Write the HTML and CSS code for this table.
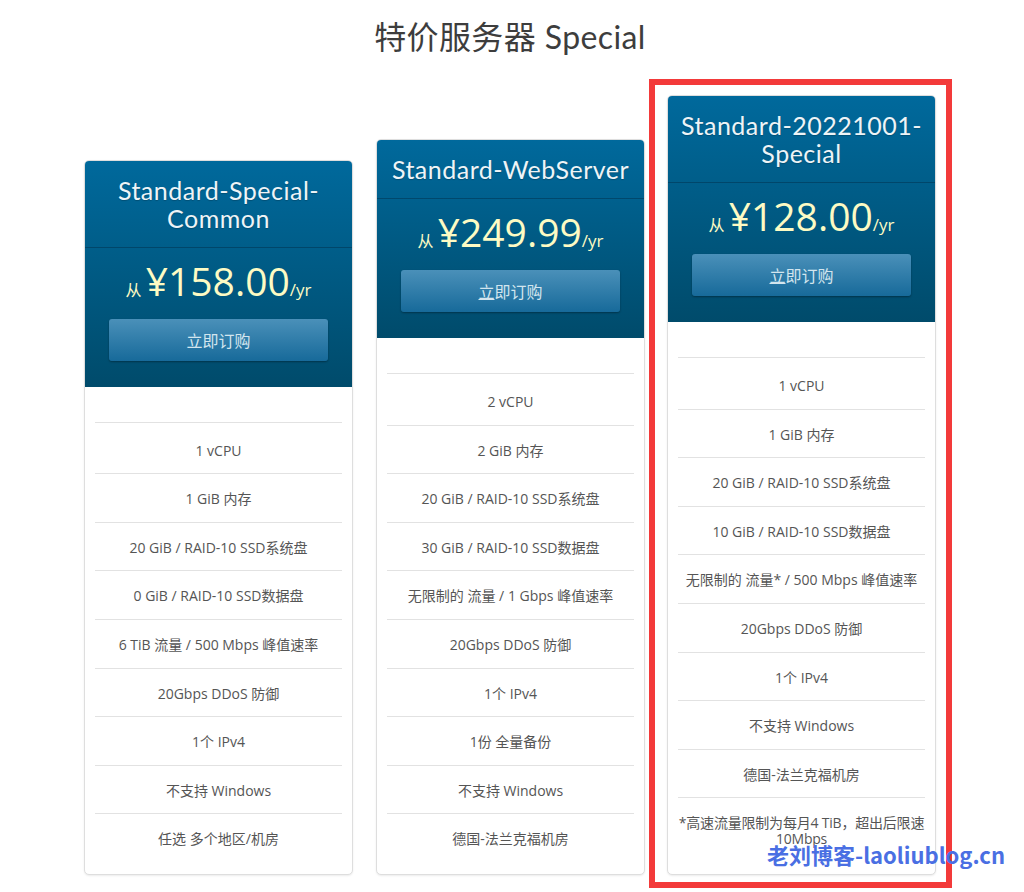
FILE: index.html
```html
<!DOCTYPE html>
<html lang="zh-CN">
<head>
<meta charset="utf-8">
<title>特价服务器 Special</title>
<link rel="stylesheet" href="styles.css">
</head>
<body>
<h1 class="page-title">特价服务器 Special</h1>
<div class="plans">
  <div class="plan">
    <div class="plan-head">
      <div class="plan-name">Standard-Special-Common</div>
      <div class="plan-price">
        <div class="price"><span class="from">从</span> <span class="amount">¥158.00</span><span class="unit">/yr</span></div>
        <a class="btn">立即订购</a>
      </div>
    </div>
    <ul class="features">
      <li>1 vCPU</li>
      <li>1 GiB 内存</li>
      <li>20 GiB / RAID-10 SSD系统盘</li>
      <li>0 GiB / RAID-10 SSD数据盘</li>
      <li>6 TiB 流量 / 500 Mbps 峰值速率</li>
      <li>20Gbps DDoS 防御</li>
      <li>1个 IPv4</li>
      <li>不支持 Windows</li>
      <li>任选 多个地区/机房</li>
    </ul>
  </div>
  <div class="plan">
    <div class="plan-head">
      <div class="plan-name">Standard-WebServer</div>
      <div class="plan-price">
        <div class="price"><span class="from">从</span> <span class="amount">¥249.99</span><span class="unit">/yr</span></div>
        <a class="btn"><span class="u">立</span>即订购</a>
      </div>
    </div>
    <ul class="features">
      <li>2 vCPU</li>
      <li>2 GiB 内存</li>
      <li>20 GiB / RAID-10 SSD系统盘</li>
      <li>30 GiB / RAID-10 SSD数据盘</li>
      <li>无限制的 流量 / 1 Gbps 峰值速率</li>
      <li>20Gbps DDoS 防御</li>
      <li>1个 IPv4</li>
      <li>1份 全量备份</li>
      <li>不支持 Windows</li>
      <li>德国-法兰克福机房</li>
    </ul>
  </div>
  <div class="highlight">
    <div class="plan">
      <div class="plan-head">
        <div class="plan-name">Standard-20221001-Special</div>
        <div class="plan-price">
          <div class="price"><span class="from">从</span> <span class="amount">¥128.00</span><span class="unit">/yr</span></div>
          <a class="btn"><span class="u">立</span>即订购</a>
        </div>
      </div>
      <ul class="features">
        <li>1 vCPU</li>
        <li>1 GiB 内存</li>
        <li>20 GiB / RAID-10 SSD系统盘</li>
        <li>10 GiB / RAID-10 SSD数据盘</li>
        <li>无限制的 流量* / 500 Mbps 峰值速率</li>
        <li>20Gbps DDoS 防御</li>
        <li>1个 IPv4</li>
        <li>不支持 Windows</li>
        <li>德国-法兰克福机房</li>
        <li class="note">*高速流量限制为每月4 TiB，超出后限速10Mbps</li>
      </ul>
    </div>
  </div>
</div>
<div class="watermark">老刘博客-laoliublog.cn</div>
</body>
</html>
```

FILE: styles.css
```css
html, body {
  margin: 0;
  padding: 0;
  background: #fff;
}

body {
  position: relative;
  width: 1024px;
  height: 892px;
  overflow: hidden;
  font-family: "Open Sans", "Noto Sans CJK SC", sans-serif;
}

.page-title {
  margin: 0;
  padding-top: 17px;
  padding-right: 4px;
  text-align: center;
  font-family: "Lato", "Noto Sans CJK SC", sans-serif;
  font-weight: 400;
  font-size: 32px;
  line-height: 40px;
  letter-spacing: 0.4px;
  color: #3d3d3d;
}

.plans {
  display: flex;
  align-items: flex-end;
  gap: 23px;
  width: 852px;
  margin: 22px 0 0 84px;
}

.plan {
  position: relative;
  width: 269px;
  box-sizing: border-box;
  background: #fff;
  border: 1px solid #dedede;
  border-radius: 5px;
  box-shadow: 0 1px 2px rgba(0, 0, 0, 0.08);
}

.plan::after {
  content: "";
  position: absolute;
  left: 10%;
  right: 10%;
  bottom: 2px;
  height: 12px;
  border-radius: 50%;
  box-shadow: 0 4px 4px rgba(0, 0, 0, 0.35);
  z-index: -1;
}

.highlight {
  margin: 0 -16px -13px -19px;
  padding: 10px 10px 7px 12px;
  border: 6px solid #f33a3a;
}

.plan-head {
  background: linear-gradient(#00699c, #004b6b);
  border-radius: 4px 4px 0 0;
  color: #eef4f7;
  text-align: center;
}

.plan-name {
  padding: 15px 8px;
  font-family: "Lato", sans-serif;
  font-size: 25px;
  line-height: 28px;
  letter-spacing: 0.5px;
  border-bottom: 1px solid rgba(0, 30, 50, 0.35);
  text-shadow: 0 1px 1px rgba(0, 0, 0, 0.2);
}

.plan-price {
  padding: 9px 24px 26px;
}

.price {
  height: 48px;
  line-height: 48px;
  color: #fdfbc4;
  white-space: nowrap;
}

.from {
  font-family: "Noto Sans CJK SC", sans-serif;
  font-size: 16px;
}

.amount {
  font-size: 39px;
}

.unit {
  font-size: 17px;
}

.btn {
  display: block;
  margin-top: 14px;
  height: 42px;
  line-height: 42px;
  border-radius: 3px;
  background: linear-gradient(#4a90b9, #176a9a);
  box-shadow: 0 1px 2px rgba(0, 0, 0, 0.35);
  color: #d3e5ee;
  font-family: "Noto Sans CJK SC", sans-serif;
  font-size: 16px;
  text-align: center;
}

.u {
  text-decoration: underline;
}

.features {
  list-style: none;
  margin: 0;
  padding: 35px 10px 12px;
}

.features li {
  border-top: 1px solid #e2e2e2;
  padding: 17px 0 14.6px;
  font-size: 14px;
  line-height: 16px;
  color: #555;
  text-align: center;
}

.features li:first-child {
  padding-top: 20px;
}

.features .note {
  letter-spacing: -0.2px;
}

.watermark {
  position: absolute;
  left: 767px;
  top: 839px;
  font-family: "Noto Sans CJK SC", sans-serif;
  font-weight: 700;
  font-size: 22px;
  line-height: 30px;
  color: #4a6fe3;
  white-space: nowrap;
}
```
